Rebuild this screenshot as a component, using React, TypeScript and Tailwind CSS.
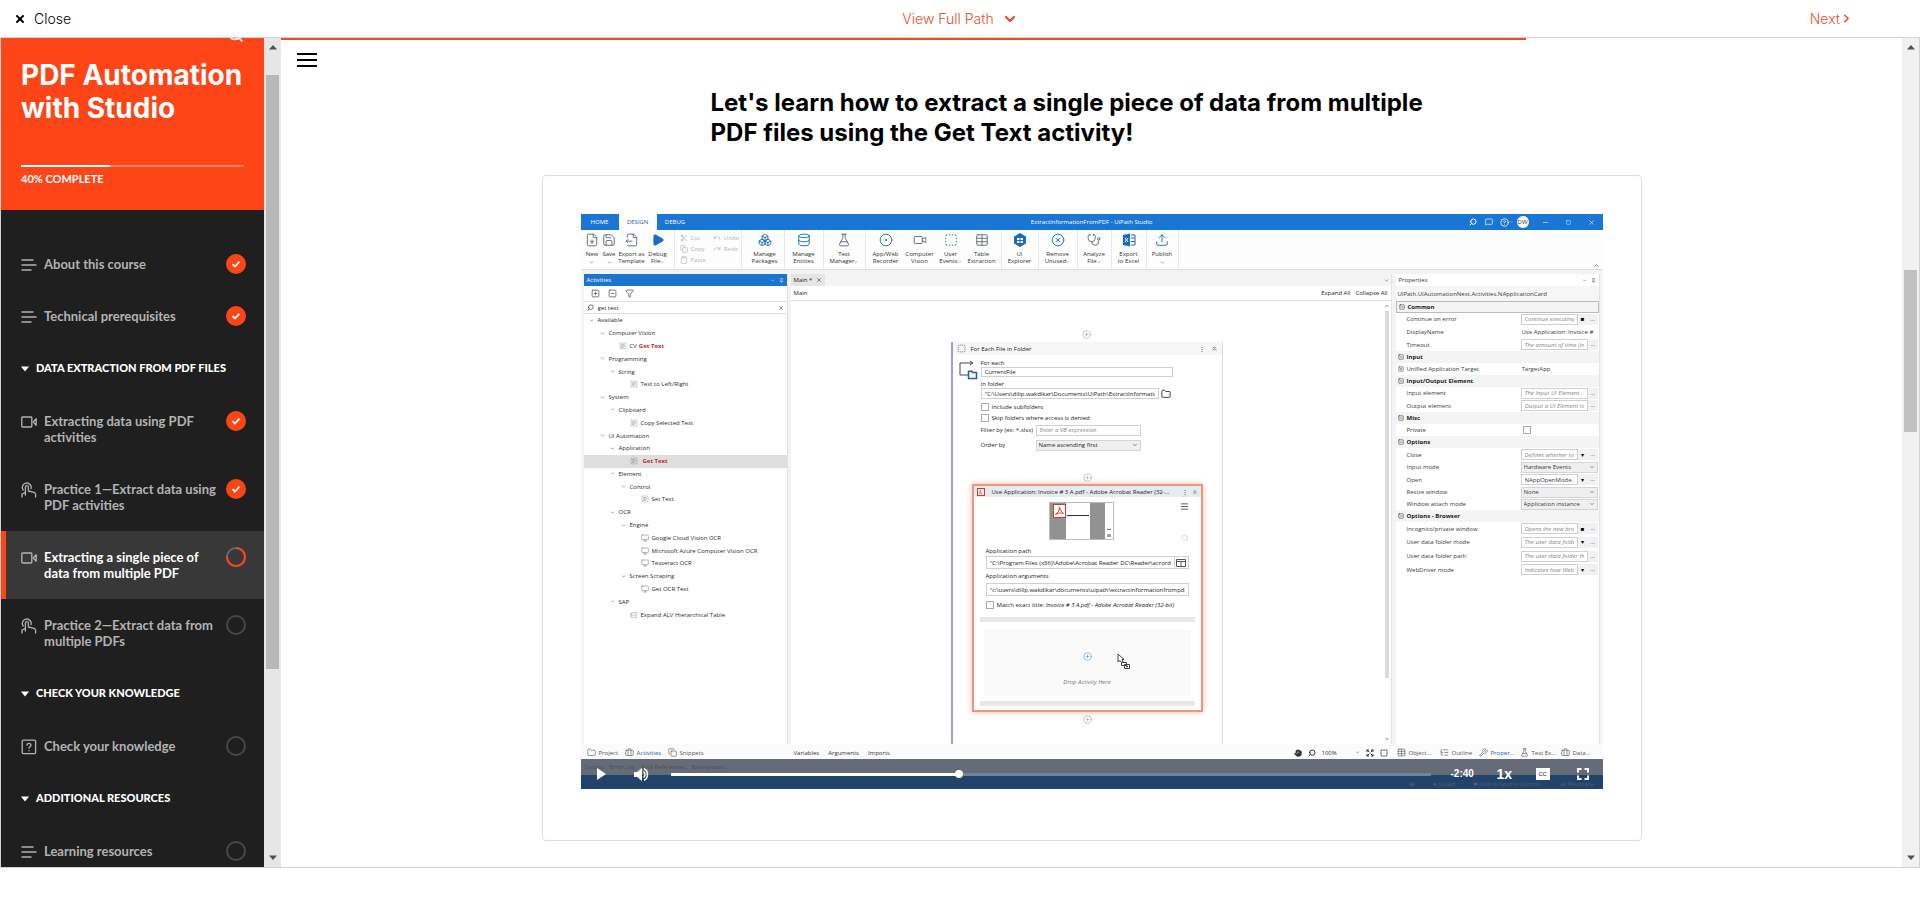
import React from "react";
import {
  BoxSelect, Boxes, ChevronDown, ChevronRight, ChevronUp, ChevronsUp, CircleDot, CircleHelp, CirclePlus, Clipboard,
  Copy, Database, Expand, FilePlus, FileOutput, FlaskConical, Folder, Funnel, Hand,
  Menu, MessageSquare, Minus, Pin, Play, Redo, Save, Scissors, Search, Square, SquareMinus,
  SquarePlus, Stethoscope, Table, TextSelect, Undo, Upload, Video, Wrench, X, XCircle, Briefcase, ListTree, Monitor,
} from "lucide-react";

type IconProps = { size?: number; strokeWidth?: number; className?: string; fill?: string };
type IconType = React.ComponentType<IconProps>;

/* ---------- course sidebar ---------- */

function LinesIcon() {
  return (
    <svg width="16" height="16" viewBox="0 0 16 16" stroke="currentColor" strokeWidth="1.4" strokeLinecap="round">
      <path d="M1 3h11M1 8h14M1 13h9" />
    </svg>
  );
}

function VideoIcon() {
  return (
    <svg width="16" height="16" viewBox="0 0 16 16" fill="none" stroke="currentColor" strokeWidth="1.3" strokeLinejoin="round">
      <rect x=".8" y="3" width="10" height="10" rx=".8" />
      <path d="M15.2 4.8v6.4L12.2 8z" />
    </svg>
  );
}

function TapIcon() {
  return (
    <svg width="16" height="16" viewBox="0 0 16 16" fill="none" stroke="currentColor" strokeWidth="1.3" strokeLinecap="round" strokeLinejoin="round">
      <path d="M2.2 8A4.4 4.4 0 1 1 10 6.6" />
      <path d="M1 15v-3l3.4-1.6V5.2a1.5 1.5 0 0 1 3 0V9l5.6 1.3c1 .3 1.6 1 1.6 2V15M4.4 10.4V13" />
    </svg>
  );
}

function QuizIcon() {
  return (
    <svg width="16" height="16" viewBox="0 0 16 16" fill="none" stroke="currentColor" strokeWidth="1.3" strokeLinecap="round">
      <rect x="1.2" y="1.2" width="13.4" height="13.4" rx="1" />
      <path d="M6 6.2c0-2.6 4-2.4 4 0C10 7.6 8 7.6 8 9.2M8 11.6v.2" />
    </svg>
  );
}

function Status({ state }: { state: "done" | "active" | "open" }) {
  if (state === "done")
    return (
      <svg width="20" height="20" viewBox="0 0 20 20" aria-label="Completed">
        <circle cx="10" cy="10" r="10" fill="#fa4616" />
        <path d="M6.5 10.2l2.4 2.3 4.6-4.8" fill="none" stroke="#fff" strokeWidth="1.8" />
      </svg>
    );
  return (
    <svg width="20" height="20" viewBox="0 0 20 20" aria-label={state === "active" ? "In progress" : "Not started"}>
      <circle cx="10" cy="10" r="9" fill="none" stroke={state === "active" ? "#666" : "#484848"} strokeWidth="2" />
      {state === "active" && (
        <path d="M10 1a9 9 0 1 1-8.9 7.8" fill="none" stroke="#fa4616" strokeWidth="2" />
      )}
    </svg>
  );
}

function Lesson({ icon, title, state }: { icon: React.ReactNode; title: string; state: "done" | "active" | "open" }) {
  const active = state === "active";
  return (
    <a
      href="#lesson"
      className={
        active
          ? "flex items-start border-l-[5px] border-[#fa4616] bg-[#383838] py-[18px] pr-[18px] pl-[15px] text-[13px] leading-4 font-bold text-white"
          : "flex items-start py-[18px] pr-[18px] pl-5 text-[13px] leading-4 font-bold text-[#b3b3b3]"
      }
    >
      <span className="mt-px h-[15px] w-[23px] shrink-0 text-[#b3b3b3]">{icon}</span>
      <span className="w-[178px] shrink-0">{title}</span>
      <span className="-my-0.5 ml-auto flex h-5"><Status state={state} /></span>
    </a>
  );
}

function SectionTitle({ children }: { children: React.ReactNode }) {
  return (
    <button className="flex h-[53px] w-full items-center gap-[7px] pl-5 text-left text-[11px] font-black text-white uppercase">
      <svg width="8" height="6" viewBox="0 0 8 6" fill="#fff"><path d="M0 .5h8L4 5.5z" /></svg>
      {children}
    </button>
  );
}

function ScrollRail({ className, thumb }: { className: string; thumb: string }) {
  return (
    <div className={`flex shrink-0 flex-col items-center ${className}`} aria-hidden="true">
      <svg width="8" height="5" viewBox="0 0 8 5" className="mt-[7px] shrink-0" fill="#505050"><path d="M0 4.5h8L4 0z" /></svg>
      <div className="w-full flex-1 px-[2px]"><div className={thumb} /></div>
      <svg width="8" height="5" viewBox="0 0 8 5" className="mb-[7px] shrink-0" fill="#505050"><path d="M0 .5h8L4 5z" /></svg>
    </div>
  );
}

function Sidebar() {
  return (
    <aside className="flex w-[263px] shrink-0 flex-col overflow-hidden bg-[#1f1f1f] font-['Lato',sans-serif]">
      <div className="h-[172px] shrink-0 bg-[#fd4518] px-5 text-white">
        <div className="flex h-[5px] items-end justify-end"><Search size={17} strokeWidth={2.5} /></div>
        <h1 className="mt-4 h-[106px] font-['Inter',sans-serif] text-[28px] leading-[33px] font-bold whitespace-nowrap">
          PDF Automation<br />with Studio
        </h1>
        <div className="h-0.5 w-full bg-[#ff8360]"><div className="h-full w-2/5 bg-white" /></div>
        <p className="mt-1 text-[11px] font-bold">40% COMPLETE</p>
      </div>
      <nav className="pt-7">
        <Lesson icon={<LinesIcon />} title="About this course" state="done" />
        <Lesson icon={<LinesIcon />} title="Technical prerequisites" state="done" />
        <SectionTitle>Data extraction from PDF files</SectionTitle>
        <Lesson icon={<VideoIcon />} title="Extracting data using PDF activities" state="done" />
        <Lesson icon={<TapIcon />} title="Practice 1—Extract data using PDF activities" state="done" />
        <Lesson icon={<VideoIcon />} title="Extracting a single piece of data from multiple PDF" state="active" />
        <Lesson icon={<TapIcon />} title="Practice 2—Extract data from multiple PDFs" state="open" />
        <SectionTitle>Check your knowledge</SectionTitle>
        <Lesson icon={<QuizIcon />} title="Check your knowledge" state="open" />
        <SectionTitle>Additional resources</SectionTitle>
        <Lesson icon={<LinesIcon />} title="Learning resources" state="open" />
      </nav>
    </aside>
  );
}

/* ---------- studio window: ribbon ---------- */

function ExplorerIcon({ size = 13, className }: IconProps) {
  return (
    <svg width={size} height={size} viewBox="0 0 14 14" className={className}>
      <path d="M7 0l6 3.500v7L7 14l-6-3.500v-7z" fill="currentColor" />
      <path d="M4 5h2.500v2H4zM7.500 5H10v2H7.500zM4 8h2.500v2H4zM7.500 8H10v2H7.500z" fill="#fff" />
    </svg>
  );
}

function ExcelIcon({ size = 13, className }: IconProps) {
  return (
    <svg width={size} height={size} viewBox="0 0 14 14" className={className} fill="none">
      <path d="M1 2l7-1.500v13L1 12z" fill="currentColor" />
      <path d="M9 2h4v10H9M9 5h4M9 8.500h4" stroke="currentColor" />
      <path d="M3 5l3 4M6 5L3 9" stroke="#fff" />
    </svg>
  );
}

function Tool({ icon: Icon, lines, width, color, fill, more }: { icon: IconType; lines: string[]; width: string; color: string; fill?: string; more?: boolean }) {
  return (
    <button className={`flex shrink-0 flex-col items-center pt-[3px] ${width}`}>
      <Icon size={14} strokeWidth={1.6} className={color} fill={fill ?? "none"} />
      <span className="mt-1 leading-[7px] whitespace-nowrap">
        {lines.map((l, i) => (
          <span key={l} className="flex items-center justify-center">
            {l}
            {more && lines.length > 1 && i === lines.length - 1 && <ChevronDown size={4} />}
          </span>
        ))}
        {more && lines.length === 1 && <ChevronDown size={5} className="mx-auto mt-0.5" />}
      </span>
    </button>
  );
}

function Mini({ icon: Icon, label }: { icon: IconType; label: string }) {
  return <button className="flex items-center gap-[3px] text-[#b5b5b5]"><Icon size={8} />{label}</button>;
}

const ribbonGroup = "flex shrink-0 border-r border-[#e8e8e8]";

function Ribbon() {
  const blue = "text-[#1b6ac9]";
  const grey = "text-[#5d6b7a]";
  return (
    <div className="flex h-10 items-stretch border-b border-[#dedede] bg-[#fdfdfd] text-[#333]">
      <div className={`${ribbonGroup} w-[94px] pl-[3px]`}>
        <Tool icon={FilePlus} lines={["New"]} width="w-[17px]" color={grey} more />
        <Tool icon={Save} lines={["Save"]} width="w-[17px]" color={grey} more />
        <Tool icon={FileOutput} lines={["Export as", "Template"]} width="w-[28px]" color={grey} />
        <Tool icon={Play} lines={["Debug", "File"]} width="w-[24px]" color={blue} fill="currentColor" more />
      </div>
      <div className={`${ribbonGroup} w-[67px] gap-[7px] pt-1 pl-[5px]`}>
        <div className="flex flex-col gap-[3px] leading-[8px]">
          <Mini icon={Scissors} label="Cut" /><Mini icon={Copy} label="Copy" /><Mini icon={Clipboard} label="Paste" />
        </div>
        <div className="flex flex-col gap-[3px] leading-[8px]">
          <Mini icon={Undo} label="Undo" /><Mini icon={Redo} label="Redo" />
        </div>
      </div>
      <div className={`${ribbonGroup} pl-1`}><Tool icon={Boxes} lines={["Manage", "Packages"]} width="w-[38px]" color={blue} /></div>
      <div className={ribbonGroup}><Tool icon={Database} lines={["Manage", "Entities"]} width="w-[38px]" color={blue} /></div>
      <div className={ribbonGroup}><Tool icon={FlaskConical} lines={["Test", "Manager"]} width="w-[41px]" color={grey} more /></div>
      <div className={`${ribbonGroup} w-[136px] pl-0.5`}>
        <Tool icon={CircleDot} lines={["App/Web", "Recorder"]} width="w-[36px]" color={blue} />
        <Tool icon={Video} lines={["Computer", "Vision"]} width="w-[32px]" color={grey} />
        <Tool icon={BoxSelect} lines={["User", "Events"]} width="w-[30px]" color={blue} more />
        <Tool icon={Table} lines={["Table", "Extraction"]} width="w-[32px]" color={grey} />
      </div>
      <div className={ribbonGroup}><Tool icon={ExplorerIcon} lines={["UI", "Explorer"]} width="w-[36px]" color={blue} /></div>
      <div className={ribbonGroup}><Tool icon={XCircle} lines={["Remove", "Unused"]} width="w-[38px]" color={blue} more /></div>
      <div className={ribbonGroup}><Tool icon={Stethoscope} lines={["Analyze", "File"]} width="w-[33px]" color={grey} more /></div>
      <div className={ribbonGroup}><Tool icon={ExcelIcon} lines={["Export", "to Excel"]} width="w-[34px]" color={blue} /></div>
      <div className={ribbonGroup}><Tool icon={Upload} lines={["Publish"]} width="w-[31px]" color={blue} more /></div>
      <ChevronUp size={7} className="mt-auto mr-[3px] ml-auto" />
    </div>
  );
}

function TitleBar() {
  return (
    <div className="flex h-4 items-stretch bg-[#1976d4] text-white">
      <div className="flex flex-1 items-stretch">
        <button className="w-[38px]">HOME</button>
        <button className="w-[38px] bg-white text-[#1a63b5]">DESIGN</button>
        <button className="w-[37px]">DEBUG</button>
      </div>
      <p className="self-center">ExtractInformationFromPDF - UiPath Studio</p>
      <div className="flex flex-1 items-center justify-end">
        <Search size={8} strokeWidth={3} className="mr-2 -scale-x-100" />
        <MessageSquare size={8} className="mr-[7px]" />
        <CircleHelp size={9} /><ChevronDown size={4} className="mr-1" />
        <span className="mr-[13px] flex size-3 items-center justify-center rounded-full bg-white text-[#333]">DW</span>
        <Minus size={7} className="mr-[17px]" />
        <Square size={5} className="mr-[17px]" />
        <X size={7} className="mr-2" />
      </div>
    </div>
  );
}

/* ---------- studio window: activities ---------- */

type Node = { depth: string; label: string; icon?: IconType; hit?: string; selected?: boolean };
const d = ["pl-[5px]", "pl-[16px]", "pl-[26px]", "pl-[37px]", "pl-[46px]", "pl-[57px]", "pl-[35px]"];
const tree: Node[] = [
  { depth: d[0], label: "Available" },
  { depth: d[1], label: "Computer Vision" },
  { depth: d[6], label: "CV", hit: "Get Text", icon: TextSelect },
  { depth: d[1], label: "Programming" },
  { depth: d[2], label: "String" },
  { depth: d[4], label: "Text to Left/Right", icon: TextSelect },
  { depth: d[1], label: "System" },
  { depth: d[2], label: "Clipboard" },
  { depth: d[4], label: "Copy Selected Text", icon: TextSelect },
  { depth: d[1], label: "UI Automation" },
  { depth: d[2], label: "Application" },
  { depth: d[4], label: "", hit: "Get Text", icon: TextSelect, selected: true },
  { depth: d[2], label: "Element" },
  { depth: d[3], label: "Control" },
  { depth: d[5], label: "Set Text", icon: TextSelect },
  { depth: d[2], label: "OCR" },
  { depth: d[3], label: "Engine" },
  { depth: d[5], label: "Google Cloud Vision OCR", icon: Monitor },
  { depth: d[5], label: "Microsoft Azure Computer Vision OCR", icon: Monitor },
  { depth: d[5], label: "Tesseract OCR", icon: Monitor },
  { depth: d[3], label: "Screen Scraping" },
  { depth: d[5], label: "Get OCR Text", icon: Monitor },
  { depth: d[2], label: "SAP" },
  { depth: d[4], label: "Expand ALV Hierarchical Table", icon: ListTree },
];

function Activities() {
  return (
    <section className="mt-1 ml-[3px] flex w-[204px] shrink-0 flex-col border-r border-[#e4e4e4] bg-white">
      <header className="flex h-3 items-center bg-[#1c74cc] px-[3px] text-white">
        Activities<ChevronDown size={5} className="mr-1 ml-auto" /><Pin size={5} />
      </header>
      <div className="flex h-4 items-center gap-2 border-b border-[#ddd] pl-[7px] text-[#555]">
        <SquarePlus size={9} /><SquareMinus size={9} /><Funnel size={9} />
      </div>
      <label className="flex h-3 items-center gap-1 border-b border-[#ddd] px-[3px]">
        <Search size={7} className="-scale-x-100" />
        <input className="w-0 flex-1 outline-none" defaultValue="get text" aria-label="Search activities" />
        <X size={6} />
      </label>
      <ul className="grid h-[307px] auto-rows-fr text-[#2c2c2c]">
        {tree.map((n, i) => (
          <li key={i} className={`flex items-center whitespace-nowrap ${n.depth} ${n.selected ? "bg-[#dedede]" : ""}`}>
            {n.icon ? <n.icon size={8} strokeWidth={1.6} className="mr-[3px] text-[#777]" /> : <ChevronDown size={5} className="mr-1" />}
            {n.label}
            {n.hit && <b className="ml-0.5 text-[#c0282d]">{n.hit}</b>}
          </li>
        ))}
      </ul>
    </section>
  );
}

/* ---------- studio window: designer ---------- */

function TinySelect({ label, value, className }: { label: string; value: string; className: string }) {
  return (
    <span className={`flex items-center border border-[#d4d4d4] bg-[#efeff1] pr-0.5 ${className}`}>
      <select aria-label={label} className="w-0 flex-1 appearance-none pl-0.5 leading-[9px] outline-none"><option>{value}</option></select>
      <ChevronDown size={6} />
    </span>
  );
}

function Plus({ className }: { className: string }) {
  return <CirclePlus size={9} strokeWidth={1.4} className={`mx-auto shrink-0 ${className}`} />;
}

const field = "border border-[#cfcfcf] bg-white px-[3px] outline-none";
const tick = "size-2 shrink-0 appearance-none border border-[#aaa] bg-white";

function AppCard() {
  return (
    <section className="mx-auto w-[231px] border-2 border-[#e39a80] bg-white shadow-[0_0_6px_#f3b9a8]">
      <header className="flex h-[11px] items-center bg-[#e6ebee] px-[3px]">
        <span className="mr-[7px] flex size-2 items-center justify-center border border-[#d33] text-[#d33]">⅄</span>
        <span className="whitespace-nowrap">Use Application: Invoice # 3 A.pdf - Adobe Acrobat Reader (32-...</span>
        <span className="mr-1 ml-auto">⋮</span><ChevronsUp size={6} />
      </header>
      <div className="flex h-[47px] justify-between pt-[5px] pr-3 pl-[75px]">
        <div className="flex h-[38px] w-[65px] shrink-0 border border-[#bbb]">
          <div className="flex w-4 items-start justify-end bg-[#929292] pt-px">
            <svg width="13" height="14" viewBox="0 0 13 14"><rect x=".5" y=".5" width="12" height="13" fill="#fff" stroke="#d33" /><path d="M6.5 3c0 4-1.500 6-4 7.500C5 9 8 8.600 10.500 9.500 8.500 8 7 6 6.500 3z" fill="none" stroke="#d33" /></svg>
          </div>
          <div className="w-6 pt-3"><div className="mx-px h-px bg-[#333]" /></div>
          <div className="w-[15px] bg-[#929292]" />
          <div className="flex flex-1 flex-col justify-end p-0.5"><div className="mb-1 h-px bg-[#777]" /><div className="h-[3px] bg-[#9a9cc8]" /></div>
        </div>
        <div className="flex flex-col items-end justify-between pb-0.5">
          <Menu size={9} /><Search size={8} className="text-[#ccc]" />
        </div>
      </div>
      <div className="px-3">
        <label htmlFor="app-path" className="block h-3 leading-[14px]">Application path</label>
        <div className="flex h-[13px] items-stretch">
          <input id="app-path" className={`w-0 flex-1 ${field}`} defaultValue={'"C:\\Program Files (x86)\\Adobe\\Acrobat Reader DC\\Reader\\acrord32.exe"'} />
          <button className="flex w-[14px] items-center justify-center border border-l-0 border-[#cfcfcf]" aria-label="Browse">
            <svg width="10" height="8" viewBox="0 0 10 8" fill="none" stroke="#555"><path d="M.5.500h9v7h-9zM.5 2.500h9M5 2.500v5" /></svg>
          </button>
        </div>
        <label htmlFor="app-args" className="block h-[14px] leading-[14px]">Application arguments</label>
        <input id="app-args" className={`block h-[13px] w-full ${field}`} defaultValue={'"c:\\users\\dilip.wakdikar\\documents\\uipath\\extractinformationfrompdf"'} />
        <label className="flex h-[18px] items-center gap-[3px] whitespace-nowrap">
          <input type="checkbox" className={tick} /><span>Match exact title: <i>Invoice # 3 A.pdf - Adobe Acrobat Reader (32-bit)</i></span>
        </label>
      </div>
      <div className="mx-[6px] mt-[3px] h-[5px] bg-[#e8e8e8]" />
      <div className="mx-[10px] mt-[7px] flex h-[67px] flex-col items-center bg-[#fafafa] pt-[23px] text-[#777]">
        <Plus className="text-[#3f8fd0]" />
        <i className="mt-[17px]">Drop Activity Here</i>
      </div>
      <div className="mx-[6px] mt-[5px] mb-1 h-[5px] bg-[#e8e8e8]" />
    </section>
  );
}

function Designer() {
  return (
    <section className="mt-1 ml-[3px] flex min-w-0 flex-1 flex-col border-r border-[#e4e4e4] bg-white">
      <header className="flex h-3 shrink-0 items-center bg-[#f3f3f3]">
        <span className="flex h-full items-center gap-1 bg-[#e5e5e5] px-[3px]">Main *<X size={6} /></span>
        <ChevronDown size={5} className="mr-0.5 ml-auto" />
      </header>
      <div className="flex h-[15px] shrink-0 items-center gap-[5px] border-b border-[#ddd] px-[3px]">
        Main<button className="ml-auto">Expand All</button><button>Collapse All</button>
      </div>
      <div className="flex min-h-0 flex-1">
        <div className="flex min-w-0 flex-1 flex-col items-center pt-[29px]">
          <Plus className="text-[#999]" />
          <section className="relative mt-[3px] flex min-h-0 w-[272px] flex-1 flex-col border-r border-l-2 border-r-[#dcdcdc] border-l-[#a19dc4]">
            <header className="flex h-[13px] shrink-0 items-center bg-[#f6f6f7] px-1">
              <BoxSelect size={9} className="mr-[5px] text-[#4c6d9c]" />For Each File in Folder
              <span className="mr-[6px] ml-auto">⋮</span><ChevronsUp size={7} />
            </header>
            <div className="flex h-[116px] shrink-0">
              <svg width="28" height="30" viewBox="0 0 28 30" fill="none" className="shrink-0">
                <path d="M15 20H7V8h12M17 6l3 2-3 2" stroke="#444" /><path d="M15.500 16.500v7h8v-6h-4l-1-1.500z" stroke="#1d5fae" strokeWidth="1.500" />
              </svg>
              <div className="flex w-[192px] flex-col">
                <label htmlFor="each" className="h-[12px] pt-1 leading-[8px]">For each</label>
                <input id="each" className={`h-[10px] ${field}`} defaultValue="CurrentFile" />
                <label htmlFor="folder" className="h-[11px] leading-[14px]">In folder</label>
                <div className="flex h-[11px] items-stretch">
                  <input id="folder" className={`w-0 flex-1 ${field}`} defaultValue={'"C:\\Users\\dilip.wakdikar\\Documents\\UiPath\\ExtractInformationFromPDF"'} />
                  <button aria-label="Browse folder" className="flex w-[14px] items-center justify-center"><Folder size={10} /></button>
                </div>
                <label className="mt-[3px] flex h-[10px] items-center gap-[3px]"><input type="checkbox" className={tick} />Include subfolders</label>
                <label className="flex h-[11px] items-center gap-[3px]"><input type="checkbox" className={tick} />Skip folders where access is denied</label>
                <div className="flex h-[14px] items-center">
                  <label htmlFor="filter" className="w-[55px]">Filter by (ex: *.xlsx)</label>
                  <input id="filter" placeholder="Enter a VB expression" className={`h-[11px] w-[105px] placeholder:text-[#888] placeholder:italic ${field}`} />
                </div>
                <div className="flex h-4 items-center">
                  <span className="w-[55px]">Order by</span>
                  <TinySelect label="Order by" value="Name ascending first" className="h-[11px] w-[105px]" />
                </div>
              </div>
            </div>
            <Plus className="mt-0.5 mb-0.5 text-[#999]" />
            <AppCard />
            <Plus className="mt-[3px] text-[#999]" />
            <svg className="absolute top-[311px] left-[164px]" width="14" height="17" viewBox="0 0 14 17" fill="#fff" stroke="#444">
              <path d="M1 1v8l2-1.500L5 10l1-1-1-2.500h2z" /><path d="M4.500 9.500h5v3h-5zM7.500 11.500h5v4h-5zM10 12.500v2M9 13.500h2" />
            </svg>
          </section>
        </div>
        <div className="flex w-2 shrink-0 flex-col items-center pt-0.5">
          <ChevronUp size={6} /><div className="mt-0.5 h-[367px] w-1 bg-[#dadada]" /><ChevronDown size={6} className="mt-auto mb-0.5" />
        </div>
      </div>
    </section>
  );
}

/* ---------- studio window: properties ---------- */

type Prop = { kind: "head" | "hint" | "text" | "select" | "tick" | "value"; label: string; value?: string; mark?: string; h: string };
const props: Prop[] = [
  { kind: "head", label: "Common", h: "h-3" },
  { kind: "hint", label: "Continue on error", value: "Continue executing", mark: "■", h: "h-3" },
  { kind: "text", label: "DisplayName", value: "Use Application: Invoice #", h: "h-[13px]" },
  { kind: "hint", label: "Timeout", value: "The amount of time (in", h: "h-[13px]" },
  { kind: "head", label: "Input", h: "h-3" },
  { kind: "text", label: "Unified Application Target", value: "TargetApp", h: "h-3" },
  { kind: "head", label: "Input/Output Element", h: "h-3" },
  { kind: "hint", label: "Input element", value: "The Input UI Element .", h: "h-3" },
  { kind: "hint", label: "Output element", value: "Output a UI Element to", h: "h-[13px]" },
  { kind: "head", label: "Misc", h: "h-3" },
  { kind: "tick", label: "Private", h: "h-3" },
  { kind: "head", label: "Options", h: "h-3" },
  { kind: "hint", label: "Close", value: "Defines whether to", mark: "▾", h: "h-[13px]" },
  { kind: "select", label: "Input mode", value: "Hardware Events", h: "h-3" },
  { kind: "value", label: "Open", value: "NAppOpenMode.", mark: "▾", h: "h-[13px]" },
  { kind: "select", label: "Resize window", value: "None", h: "h-3" },
  { kind: "select", label: "Window attach mode", value: "Application instance", h: "h-3" },
  { kind: "head", label: "Options - Browser", h: "h-3" },
  { kind: "hint", label: "Incognito/private window", value: "Opens the new browser", mark: "■", h: "h-[13px]" },
  { kind: "hint", label: "User data folder mode", value: "The user data folder", mark: "▾", h: "h-[14px]" },
  { kind: "hint", label: "User data folder path", value: "The user data folder that", h: "h-[14px]" },
  { kind: "hint", label: "WebDriver mode", value: "Indicates how WebDriver", mark: "▾", h: "h-[13px]" },
];

function PropRow({ p, i }: { p: Prop; i: number }) {
  if (p.kind === "head")
    return (
      <div className={`flex items-center gap-[3px] bg-[#f4f4f5] pl-[2px] font-bold text-[#222] ${p.h} ${i === 0 ? "border border-[#bbb]" : ""}`}>
        <SquareMinus size={6} />{p.label}
      </div>
    );
  return (
    <div className={`flex items-center pr-px ${p.h}`}>
      <label htmlFor={`prop-${i}`} className="flex w-[125px] shrink-0 items-center gap-[3px] pl-[2px] whitespace-nowrap">
        {p.label.startsWith("Unified") ? <SquarePlus size={6} /> : <span className="w-[6px]" />}{p.label}
      </label>
      {p.kind === "text" && <input id={`prop-${i}`} className="w-0 flex-1 pl-px outline-none" defaultValue={p.value} />}
      {p.kind === "tick" && <input id={`prop-${i}`} type="checkbox" className={`ml-0.5 ${tick}`} />}
      {p.kind === "select" && <TinySelect label={p.label} value={p.value ?? ""} className="h-[11px] flex-1" />}
      {(p.kind === "hint" || p.kind === "value") && (
        <>
          <input
            id={`prop-${i}`}
            placeholder={p.kind === "hint" ? p.value : undefined}
            defaultValue={p.kind === "value" ? p.value : undefined}
            className={`h-[11px] w-0 flex-1 placeholder:text-[#888] placeholder:italic ${field}`}
          />
          {p.mark && <span className="flex h-[11px] w-[10px] items-center justify-center bg-[#f1f1f4] text-black">{p.mark}</span>}
          <button className="h-[11px] w-[10px] bg-[#f1f1f4] leading-[9px]" aria-label={`Edit ${p.label}`}>...</button>
        </>
      )}
    </div>
  );
}

function Properties() {
  return (
    <section className="mt-1 mr-[3px] ml-1 flex w-[204px] shrink-0 flex-col border-r border-[#e4e4e4] bg-white text-[#3a3a3a]">
      <header className="flex h-3 items-center px-[3px]">Properties<ChevronDown size={5} className="mr-1 ml-auto" /><Pin size={5} /></header>
      <p className="flex h-[15px] items-center bg-[#f6f6f6] px-[2px]">UiPath.UIAutomationNext.Activities.NApplicationCard</p>
      {props.map((p, i) => <PropRow key={p.label} p={p} i={i} />)}
    </section>
  );
}

/* ---------- studio window: footer and player ---------- */

function DockTab({ icon: Icon, label, width, on }: { icon: IconType; label: string; width: string; on?: boolean }) {
  return (
    <button className={`flex shrink-0 items-center gap-[3px] ${width} ${on ? "text-[#1f63b5]" : "text-[#555]"}`}>
      <Icon size={9} strokeWidth={1.6} className="text-[#555]" />{label}
    </button>
  );
}

function DockBar() {
  return (
    <div className="flex h-[15px] shrink-0 items-center bg-[#fbfbfb] pt-0.5 pl-[6px] text-[#333]">
      <div className="flex w-[207px] shrink-0">
        <DockTab icon={Folder} label="Project" width="w-[38px]" />
        <DockTab icon={Briefcase} label="Activities" width="w-[43px]" on />
        <DockTab icon={Copy} label="Snippets" width="w-[60px]" />
      </div>
      <div className="flex flex-1 items-center gap-[9px]">
        <button>Variables</button><button>Arguments</button><button>Imports</button>
      </div>
      <div className="mr-[9px] flex shrink-0 items-center gap-[6px]">
        <Hand size={8} fill="currentColor" />
        <Search size={8} strokeWidth={3} className="-scale-x-100" />
        <span className="w-[27px]">100%</span><ChevronDown size={5} />
        <Expand size={8} strokeWidth={3} /><BoxSelect size={8} strokeWidth={3} />
      </div>
      <div className="flex w-[206px] shrink-0">
        <DockTab icon={Table} label="Object..." width="w-[43px]" />
        <DockTab icon={ListTree} label="Outline" width="w-[39px]" />
        <DockTab icon={Wrench} label="Proper..." width="w-[41px]" on />
        <DockTab icon={FlaskConical} label="Test Ex..." width="w-[41px]" />
        <DockTab icon={Briefcase} label="Data..." width="w-[36px]" />
      </div>
    </div>
  );
}

function PlayerControls() {
  return (
    <div className="absolute inset-x-0 bottom-0 flex h-[30px] items-center pr-[14px] pl-4 font-['Liberation_Sans',sans-serif] text-white">
      <button aria-label="Play" className="w-[37px]">
        <svg width="9" height="12" viewBox="0 0 9 12" fill="#fff"><path d="M0 0l9 6-9 6z" /></svg>
      </button>
      <button aria-label="Mute" className="w-[37px]">
        <svg width="15" height="13" viewBox="0 0 15 13" fill="none"><path d="M0 4h3l5-4v13L3 9H0z" fill="#fff" /><path d="M9.500 3.500c2 1.500 2 4.500 0 6M10 .800c4.600 1.700 4.600 9.700 0 11.400" stroke="#fff" strokeWidth="1.500" /></svg>
      </button>
      <div className="flex h-2 min-w-0 flex-1 items-center" role="presentation">
        <div className="h-[3px] w-[38%] bg-white" />
        <div className="-ml-1 size-2 shrink-0 rounded-full bg-white" />
        <div className="h-[3px] flex-1 bg-[#71849a]" />
      </div>
      <span className="w-[66px] pl-[20px] text-[10px] font-bold">-2:40</span>
      <button className="w-[39px] text-left text-sm leading-none font-bold">1x</button>
      <button aria-label="Captions" className="flex w-[41px]">
        <span className="flex h-3 w-[14px] items-center justify-center bg-white text-[8px] leading-none text-[#3b4b60]">cc</span>
      </button>
      <button aria-label="Full screen">
        <svg width="12" height="12" viewBox="0 0 12 12" fill="none" stroke="#fff" strokeWidth="2"><path d="M1 4.500V1h3.500M7.500 1H11v3.500M11 7.500V11H7.500M4.500 11H1V7.500" /></svg>
      </button>
    </div>
  );
}

function VideoFrame() {
  return (
    <div className="relative w-full overflow-hidden bg-[#f3f3f3] font-['Open_Sans','Noto_Sans',sans-serif] text-[6px] leading-[8px] text-[#222]">
      <TitleBar />
      <Ribbon />
      <div className="flex h-[474px]">
        <Activities />
        <Designer />
        <Properties />
      </div>
      <DockBar />
      <div className="flex h-4 gap-[6px] bg-[#666c77] pt-1 pl-[3px] text-[#4a4f59]">
        <span>Output</span><span>Error List</span><span>Find References</span><span>Breakpoints</span>
      </div>
      <div className="flex h-[14px] items-end justify-end gap-[18px] bg-[#22436a] pr-[9px] pb-0.5 leading-[6px] text-[#46617f]">
        <span>▤</span><span>● Saved</span><span>✚ Add to Source Control</span><span>uk Medicare</span>
      </div>
      <PlayerControls />
    </div>
  );
}

/* ---------- page ---------- */

export default function App() {
  return (
    <div className="flex h-screen flex-col bg-white pb-[43px] font-['Inter',sans-serif] text-black">
      <header className="grid h-[37px] shrink-0 grid-cols-3 items-center text-sm font-light">
        <button className="flex items-center gap-2 justify-self-start pl-[14px]">
          <X size={12} strokeWidth={4} />Close
        </button>
        <button className="flex items-center gap-2 justify-self-center text-[#e8502a]">
          View Full Path<ChevronDown size={16} strokeWidth={3.5} />
        </button>
        <a href="#next" className="mr-[67px] flex items-center justify-self-end text-[#e8502a]">
          Next<ChevronRight size={13} strokeWidth={3} />
        </a>
      </header>
      <div className="flex min-h-0 flex-1 border border-[#d2d2d2]">
        <Sidebar />
        <ScrollRail className="w-[17px] bg-[#e6e6e6]" thumb="mt-[25px] h-[594px] w-full bg-[#b8b8b8]" />
        <main className="min-w-0 flex-1 overflow-hidden">
          <div className="h-0.5 w-full"><div className="h-full w-[76.8%] bg-[#e8501f]" /></div>
          <button aria-label="Toggle menu" className="mt-[13px] ml-4 flex flex-col gap-1">
            <span className="h-0.5 w-5 bg-black" /><span className="h-0.5 w-5 bg-black" /><span className="h-0.5 w-5 bg-black" />
          </button>
          <h2 className="mx-auto mt-[21px] w-[762px] pr-10 text-2xl leading-[30px] font-bold">
            Let's learn how to extract a single piece of data from multiple PDF files using the Get Text activity!
          </h2>
          <div className="mx-auto mt-[27px] h-[666px] w-full max-w-[1100px] rounded-sm border border-[#dcdcdc] p-[38px]">
            <VideoFrame />
          </div>
        </main>
        <ScrollRail className="w-[17px] bg-[#f1f1f1]" thumb="mt-[220px] h-[162px] w-full bg-[#c1c1c1]" />
      </div>
    </div>
  );
}
